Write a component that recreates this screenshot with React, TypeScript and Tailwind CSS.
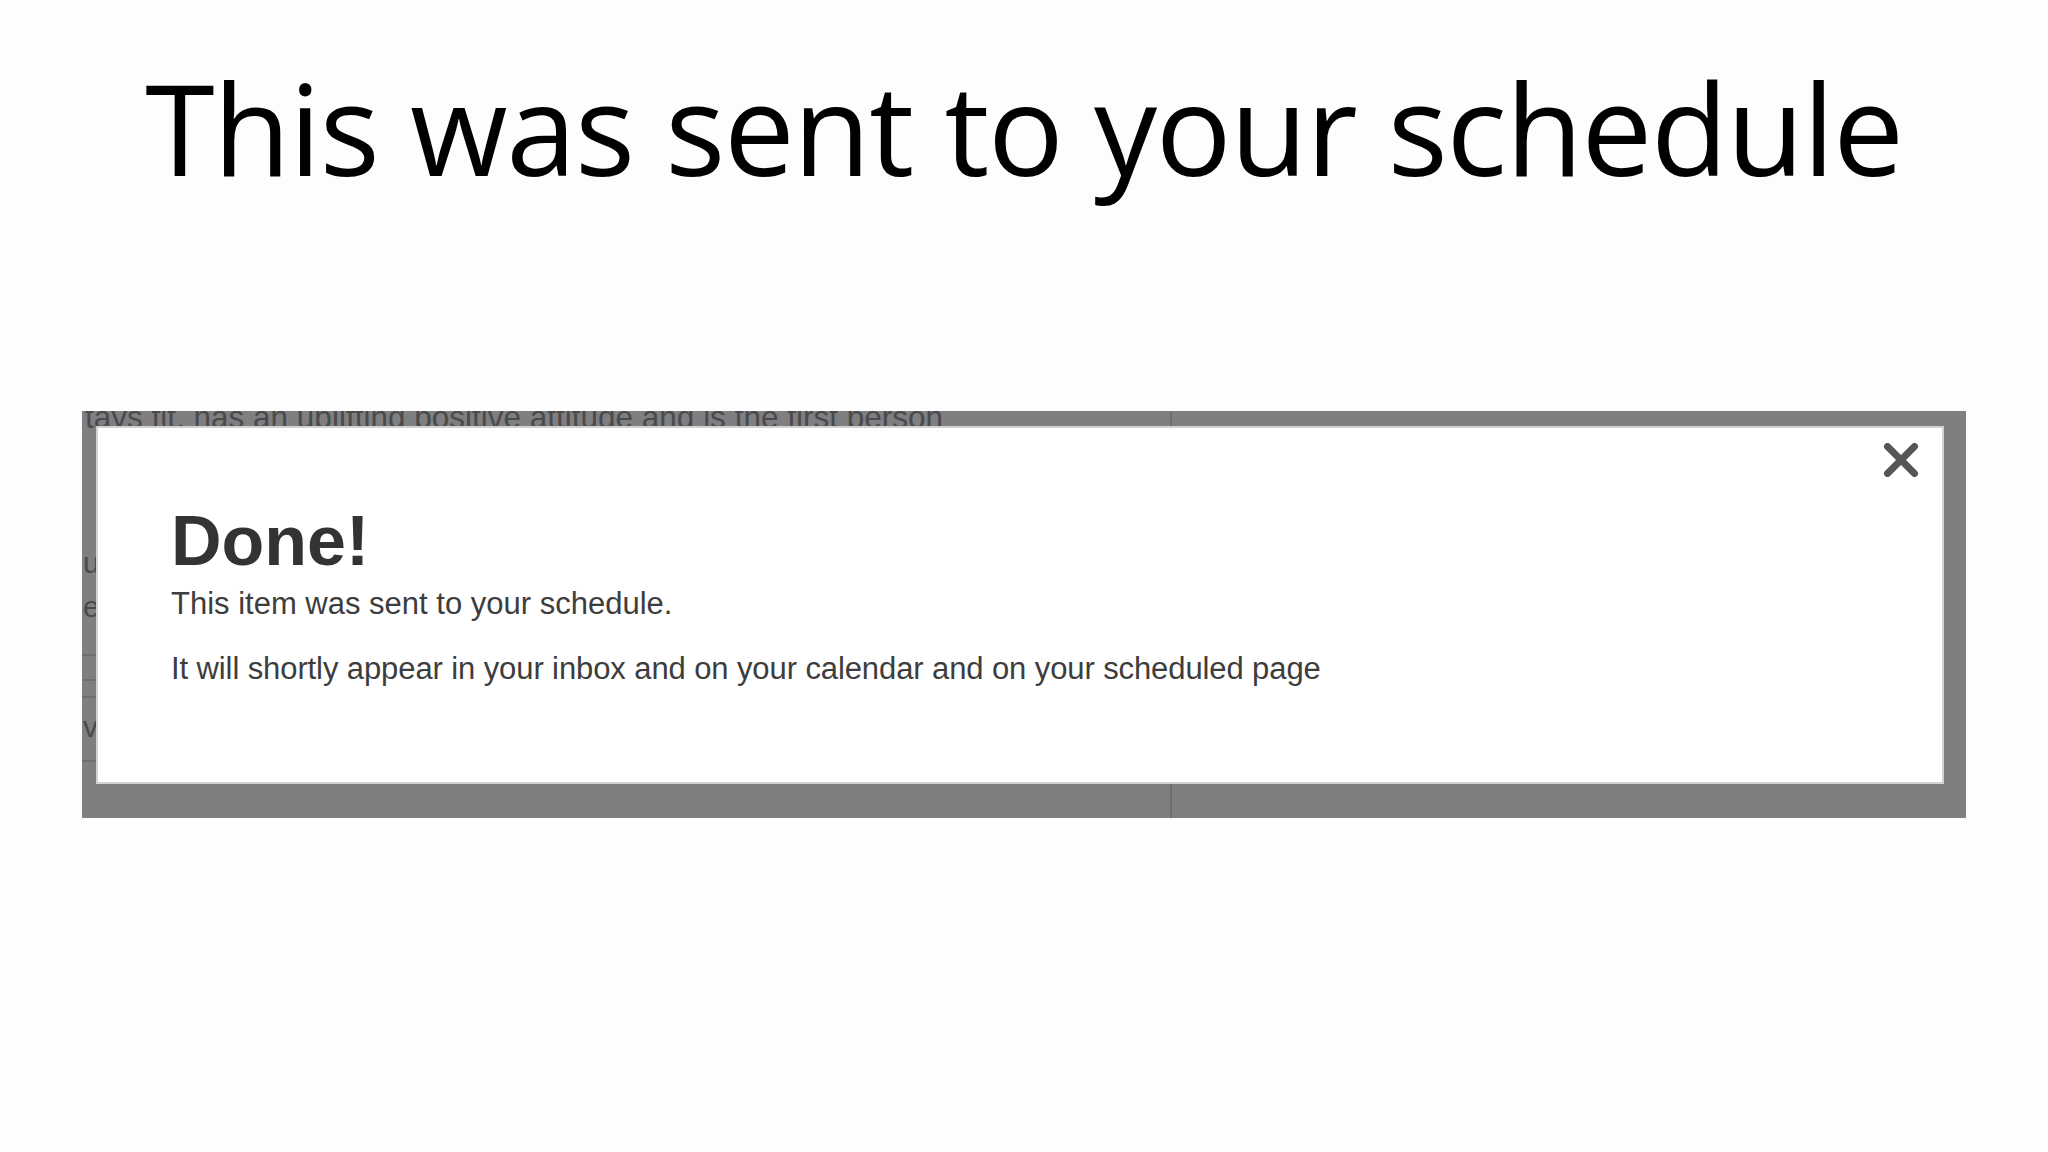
function BackdropPage() {
  // the page behind the dialog, dimmed by the overlay
  return (
    <div className="flex h-full text-[#4b4a4c]" style={{ fontFamily: '"Liberation Sans", Arial, sans-serif' }}>
      <div className="w-[1090px] shrink-0 border-r-2 border-[#6f6e70] flex flex-col text-[30px] leading-none">
        <p className="mt-[-9px] h-[30px] pl-[3px] text-[31.5px] whitespace-nowrap">
          tays fit, has an uplifting positive attitude and is the first person
        </p>
        <p className="mt-[116px] h-[30px] pl-[1px]">usually</p>
        <p className="mt-[14px] h-[30px] pl-[1px]">energy</p>
        <div className="mt-[32px] border-t-2 border-[#6f6e70] h-[25px]" />
        <div className="border-t-2 border-[#6f6e70] h-[17px]" />
        <div className="border-t-2 border-[#6f6e70] h-[64px] pl-[1px] pt-[14px]">
          <p>very</p>
        </div>
        <div className="border-t-2 border-[#6f6e70]" />
      </div>
      <div className="flex-1" />
    </div>
  );
}

function CloseIcon() {
  return (
    <svg width="36" height="34" viewBox="0 0 36 34" fill="none">
      <path d="M4.5 3.5 L31.5 30.5 M31.5 3.5 L4.5 30.5" stroke="#555555" strokeWidth="7" strokeLinecap="round" />
    </svg>
  );
}

function DoneDialog() {
  return (
    <div className="absolute left-[14px] top-[15px] right-[22px] bottom-[34px] bg-white border-2 border-[#d2d2d2]">
      <button className="absolute right-[23px] top-[15px]">
        <CloseIcon />
      </button>
      <div className="pl-[73px] pt-[78px]" style={{ fontFamily: '"Liberation Sans", Arial, sans-serif' }}>
        <h2 className="text-[70px] leading-none font-bold text-[#333333]">Done!</h2>
        <p className="mt-[12px] text-[31px] leading-none text-[#3d3d3d]">This item was sent to your schedule.</p>
        <p className="mt-[34px] text-[31px] leading-none tracking-[-0.1px] text-[#3d3d3d]">
          It will shortly appear in your inbox and on your calendar and on your scheduled page
        </p>
      </div>
    </div>
  );
}

export default function App() {
  return (
    <div className="w-full h-[1152px] bg-[#fdfdfd] flex flex-col overflow-hidden">
      <h1
        className="mt-[64px] h-[126px] text-center text-[126px] leading-none tracking-[-1.3px] text-black whitespace-nowrap"
        style={{ fontFamily: '"Open Sans", "Noto Sans", sans-serif' }}
      >
        This was sent to your schedule
      </h1>
      <div className="relative mt-[221px] mx-[82px] h-[407px] bg-[#7f7e80] overflow-hidden">
        <BackdropPage />
        <DoneDialog />
      </div>
    </div>
  );
}
